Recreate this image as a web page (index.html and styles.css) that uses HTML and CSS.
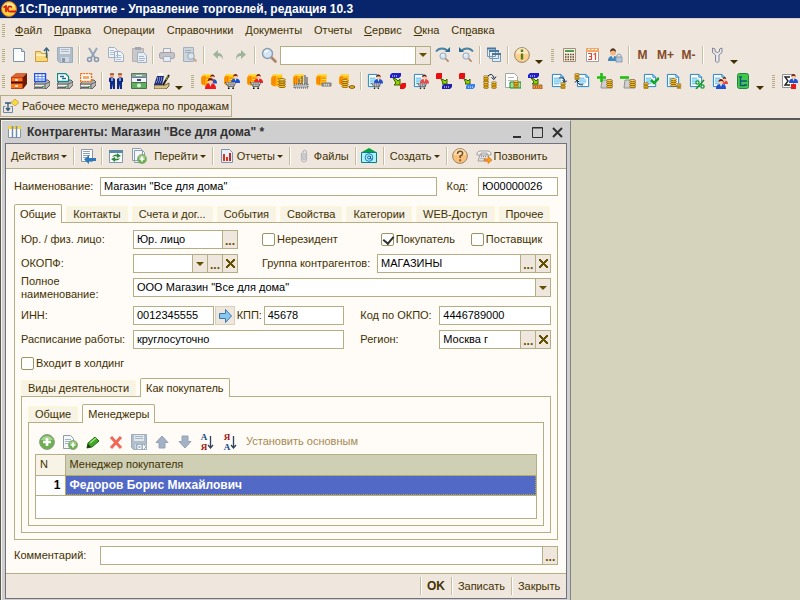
FILE: index.html
```
<!DOCTYPE html>
<html lang="ru">
  <head>
    <meta charset="utf-8">
    <title>1С:Предприятие - Управление торговлей, редакция 10.3</title>
    <link rel="stylesheet" href="styles.css">
  </head>
  <body>
    <svg class="sprite" aria-hidden="true">
      <!-- заготовки -->
      <symbol id="p-doc" viewBox="0 0 16 16">
        <path d="M1.500 1.500h9l3 3v10h-12z" fill="#fff" stroke="#1880c8"/>
        <path d="M10.500 1.500v3h3" fill="none" stroke="#1880c8"/>
        <path d="M3 5.500h6M3 7.500h8M3 9.500h8M3 11.500h6" stroke="#40b0e8"/>
      </symbol>
      <symbol id="p-sheet" viewBox="0 0 16 16">
        <path d="M2.500 1.500h8l3 3v10h-11z" fill="#fcfdff" stroke="#7b94ad"/>
        <path d="M10.500 1.500v3h3" fill="#d4e2ee" stroke="#7b94ad"/>
      </symbol>
      <symbol id="p-coins" viewBox="0 0 8 10">
        <g fill="#ffc71c" stroke="#7a4c00" stroke-width=".8">
          <ellipse cx="4" cy="8.400" rx="3.500" ry="1.200"/>
          <ellipse cx="4" cy="6.200" rx="3.500" ry="1.200"/>
          <ellipse cx="4" cy="4" rx="3.500" ry="1.200"/>
          <ellipse cx="4" cy="1.800" rx="3.500" ry="1.200" fill="#ffe46a"/>
        </g>
      </symbol>
      <symbol id="p-man" viewBox="0 0 10 10">
        <path d="M0 10c0-4 2-5 5-5s5 1 5 5z" fill="currentColor"/>
        <path d="M4 5l1 3 1-3z" fill="#fff"/>
        <circle cx="5" cy="3" r="2.400" fill="#ffc8a0"/>
        <path d="M2.500 3c0-4 5-4 5 0-1-1-3-1.500-5 0z" fill="#6a1c08"/>
      </symbol>
      <symbol id="p-goods" viewBox="0 0 16 16">
        <path d="M0 5l3-4h3v13H2l-2-2z" fill="#ff9c00"/>
        <path d="M6 1h6v9l-2 4H5z" fill="#ffc010"/>
        <path d="M3 1h9l-1 2H2z" fill="#ffde48"/>
        <path d="M2 5v7M4 4v9M6 6h5M6 9h5M6 12h4" stroke="#f07c00"/>
        <path d="M7 7.500h4M7 10.500h3" stroke="#ffe860"/>
      </symbol>
      <symbol id="p-cart" viewBox="0 0 12 8">
        <path d="M0 0h12l-2 5H3z" fill="#e8e8e8" stroke="#484848"/>
        <path d="M2 2.500h8M4 0v5M6.500 0v5M9 0v5" stroke="#585858" stroke-width=".7"/>
        <circle cx="4" cy="7" r="1"/><circle cx="9" cy="7" r="1"/>
      </symbol>
      <symbol id="p-printer" viewBox="0 0 16 16">
        <path d="M0 11l4-4h10l2 2v3l-4 4H1l-1-1z" fill="#b8b8b8" stroke="#404040" stroke-width=".8"/>
        <path d="M0 11h11l5-2M11 11v5" fill="none" stroke="#505050" stroke-width=".8"/>
        <path d="M1 12.500h9" stroke="#eee"/><path d="M1 14.500h8" stroke="#606060"/>
        <path d="M8 13.500h2" stroke="#30c030"/>
      </symbol>
      <symbol id="p-plus" viewBox="0 0 16 16">
        <circle cx="8" cy="8" r="7.400" fill="#6cb050" stroke="#8a9c84"/>
        <path d="M2 6a6.500 6.500 0 0 1 12 0z" fill="#a8d490"/>
        <path d="M8 4v8M4 8h8" stroke="#fff" stroke-width="2.600"/>
      </symbol>
      <symbol id="p-lens" viewBox="0 0 16 16">
        <path d="M10 10l4.500 4.500" stroke="#b08468" stroke-width="2.600" stroke-linecap="round"/>
        <circle cx="6.500" cy="6.500" r="5" fill="#d4e6f6" stroke="#8c9cb0" stroke-width="1.400"/>
        <path d="M4 6a3 3 0 0 1 3-2.500" stroke="#fff" stroke-width="1.500" fill="none"/>
      </symbol>

      <!-- стандартная панель -->
      <symbol id="i-new" viewBox="0 0 16 16"><use href="#p-sheet"/></symbol>
      <symbol id="i-open" viewBox="0 0 16 16">
        <path d="M1.500 14.500V4.500h5l1 2h6v8z" fill="#f8d878" stroke="#c89c40"/>
        <path d="M2 8h11" stroke="#fff0b8" stroke-width="2"/>
        <path d="M12.500 11V2M10 4l2.500-3L15 4" fill="none" stroke="#3c6478" stroke-width="1.400"/>
      </symbol>
      <symbol id="i-save" viewBox="0 0 16 16">
        <path d="M.500.500h15v15h-13l-2-2z" fill="#b0becc" stroke="#9cacbc"/>
        <path d="M3 1h10v6H3z" fill="#e0e8ee"/><path d="M4 2.500h8M4 4.500h8" stroke="#a8b8c8"/>
        <path d="M4 10h8v5H4z" fill="#d0d8e0"/><path d="M5 11h3v4H5z" fill="#8898ac"/>
      </symbol>
      <symbol id="i-cut" viewBox="0 0 16 16">
        <path d="M4 1l6 10M12 1L6 11" stroke="#94a4b8" stroke-width="2"/>
        <circle cx="4.500" cy="12.500" r="2" fill="none" stroke="#8496b0" stroke-width="1.500"/>
        <circle cx="11.500" cy="12.500" r="2" fill="none" stroke="#8496b0" stroke-width="1.500"/>
      </symbol>
      <symbol id="i-copy" viewBox="0 0 16 16">
        <path d="M.500.500h6l3 3v7h-9zM6.500 4.500h6l3 3v7h-9z" fill="#f0f4f8" stroke="#a0b0c4"/>
        <path d="M2 3.500h4M2 5.500h4M2 7.500h4M8 8.500h5M8 10.500h6M8 12.500h5" stroke="#b0c0d4"/>
      </symbol>
      <symbol id="i-paste" viewBox="0 0 16 16">
        <path d="M1.500 1.500h11v13h-11z" fill="#ccc8c8" stroke="#b4b0b4"/>
        <path d="M4 0h6v3H4z" fill="#a0a8b4"/>
        <path d="M6.500 5.500h6l3 3v7h-9z" fill="#e4ecf4" stroke="#a0b0c4"/>
        <path d="M8 9.500h5M8 11.500h6M8 13.500h5" stroke="#a8b8cc"/>
      </symbol>
      <symbol id="i-print" viewBox="0 0 16 16">
        <path d="M4.500 1.500h7v5h-7z" fill="#f0f0f4" stroke="#a8a8b8"/>
        <rect x=".5" y="5.500" width="15" height="6" rx="2" fill="#c4c4c8" stroke="#a0a0ac"/>
        <path d="M4.500 9.500h7v5h-7z" fill="#e4ecf8" stroke="#a8b0c0"/>
      </symbol>
      <symbol id="i-preview" viewBox="0 0 16 16">
        <path d="M1.500.500h10v14h-10z" fill="#ccd4dc" stroke="#a4b0bc"/>
        <path d="M3 3.500h6M3 5.500h5" stroke="#a4b0c0"/>
        <circle cx="9" cy="9" r="3.300" fill="#dce4ec" stroke="#98a4b4"/>
        <path d="M11.500 11.500l3 3" stroke="#c4a490" stroke-width="2"/>
      </symbol>
      <symbol id="i-undo" viewBox="0 0 16 16"><path d="M3 7.500l5-4.500v3c4 0 5 3 5 7-1-3-2-4-5-4v3z" fill="#a0b49c"/></symbol>
      <symbol id="i-redo" viewBox="0 0 16 16"><path d="M13 7.500L8 3v3c-4 0-5 3-5 7 1-3 2-4 5-4v3z" fill="#a0b49c"/></symbol>
      <symbol id="i-find" viewBox="0 0 16 16"><use href="#p-lens"/></symbol>
      <symbol id="i-find-next" viewBox="0 0 16 16">
        <path d="M1 4.500c3-4 9-4 12 0" fill="none" stroke="#4c84a4" stroke-width="2"/><path d="M10 5h5V0z" fill="#2c6c90"/>
        <use href="#p-lens" x="4" y="5" width="10" height="10"/>
      </symbol>
      <symbol id="i-find-prev" viewBox="0 0 16 16">
        <path d="M15 4.500c-3-4-9-4-12 0" fill="none" stroke="#4c84a4" stroke-width="2"/><path d="M6 5H1V0z" fill="#2c6c90"/>
        <use href="#p-lens" x="4" y="5" width="10" height="10"/>
      </symbol>
      <symbol id="i-windows" viewBox="0 0 16 16">
        <g fill="#e4eef6" stroke="#7898b0"><path d="M1.500 1.500h8v8h-8zM3.500 3.500h9v8h-9zM6.500 6.500h8v8h-8z"/></g>
        <path d="M1 1.500h9M3 4h10M6 7h9" stroke="#48789c" stroke-width="2"/>
      </symbol>
      <symbol id="i-info" viewBox="0 0 16 16">
        <circle cx="8" cy="8" r="7.400" fill="#fcd08c" stroke="#988870"/>
        <path d="M2 7a6 6 0 0 1 12 0z" fill="#ffe8c0"/>
        <path d="M8 2.500v2.500M8 6.500v6" stroke="#508020" stroke-width="2.400"/>
      </symbol>
      <symbol id="i-calc" viewBox="0 0 16 16">
        <path d="M2.500 1.500h12v13h-12z" fill="#f8f0dc" stroke="#a09078"/>
        <path d="M4 3h9v2H4z" fill="#4c9c58"/>
        <path d="M4 7.500h9M4 10h9M4 12.500h9" stroke="#604030" stroke-width="1.400" stroke-dasharray="1.500 1"/>
      </symbol>
      <symbol id="i-calendar" viewBox="0 0 16 16">
        <path d="M2.500 1.500h12v13h-12z" fill="#fff" stroke="#a8a098"/><path d="M2 1h13v4H2z" fill="#f0a868"/>
        <path d="M4 2.500h9" stroke="#fff" stroke-dasharray="2 1.500"/>
        <path d="M4 6.500h3.500v6H4M5 9.500h2.500M9.500 7.500l2-1v6.500" fill="none" stroke="#e04838" stroke-width="1.200"/>
      </symbol>
      <symbol id="i-user-lock" viewBox="0 0 16 16">
        <path d="M1 14c0-4 2-5 5-5s5 1 5 5z" fill="#4088b8"/><path d="M5 9l1 3 1-3z" fill="#fff"/>
        <circle cx="6" cy="5.500" r="3" fill="#f4b880"/><path d="M3 5c0-5 6-5 6 0-2-2-4-2-6 0z" fill="#503828"/>
        <path d="M10 10V8q2-2 4 0v2" fill="none" stroke="#90a0b0"/><path d="M9 10h6v5H9z" fill="#b4c8dc" stroke="#7890a8" stroke-width=".8"/>
      </symbol>
      <symbol id="i-wrench" viewBox="0 0 16 16">
        <path d="M3.500 1v4.500l3 2.500v6.500q2 2 3.500 0V8l3-2.500V1l-2.500 1v2.500l-2.200 1-2.300-1V2z" fill="#e8e8ec" stroke="#848894"/>
      </symbol>

      <!-- панель конфигурации -->
      <symbol id="i-cabinet" viewBox="0 0 16 16">
        <path d="M0 4l5-4h11l-4 4z" fill="#d86838"/><path d="M0 4h12v12H0z" fill="#c83c10"/><path d="M12 4l4-4v11l-4 5z" fill="#6c1c08"/>
        <path d="M0 9.500h12" stroke="#501000" stroke-width="1.500"/><path d="M1 5h10v3H1zM0 11h11v4H0z" fill="#f87820"/><path d="M4 7h3M4 13h3" stroke="#fff" stroke-width="1.500"/>
      </symbol>
      <symbol id="i-print-table" viewBox="0 0 16 16"><use href="#p-printer"/>
        <path d="M.500.500h11v8H.500z" fill="#fff" stroke="#2050e8" stroke-width="1.500"/><path d="M4 1v7M8 1v7M1 3.500h10M1 6h10" stroke="#6088f0"/>
      </symbol>
      <symbol id="i-print-doc" viewBox="0 0 16 16"><use href="#p-printer"/>
        <path d="M.500.500h8l3 3v5H.500z" fill="#fff" stroke="#108888" stroke-width="1.300"/><path d="M3 3.500h4M5 5.500h4" stroke="#2070a0" stroke-width="1.500"/>
      </symbol>
      <symbol id="i-print-label" viewBox="0 0 16 16"><use href="#p-printer"/>
        <path d="M.500.500h11v8H.500z" fill="#fff" stroke="#f07010" stroke-width="1.500" stroke-dasharray="2 .7"/><path d="M3 3h6v3H3z" fill="#f8a868"/>
      </symbol>
      <symbol id="i-partners" viewBox="0 0 16 16">
        <path d="M1 5l3-1 3 2v10H5v-5l-1 5H2V9L1 9zM15 5l-3-1-3 2v10h2v-5l1 5h2V9h1z" fill="#0c2c88"/><path d="M4 5v3M12 5v3" stroke="#fff"/>
        <circle cx="4" cy="2.500" r="2" fill="#f8a070"/><circle cx="12" cy="2.500" r="2" fill="#f8a070"/><path d="M2 1h4M10 1h4" stroke="#501808"/>
      </symbol>
      <symbol id="i-money" viewBox="0 0 16 16">
        <path d="M.500.500h15v4H.500z" fill="#84a890" stroke="#587868"/><path d="M.500 4.500h15v5H.500z" fill="#f4f4f8" stroke="#7078a0"/><path d="M.500 9.500h15v6H.500z" fill="#60b060" stroke="#487048"/>
        <circle cx="8" cy="12.500" r="2" fill="#dcf0dc"/><path d="M5 2.500h6" stroke="#e8f8e8"/><path d="M6 7h4" stroke="#3c4880" stroke-width="2"/>
      </symbol>
      <symbol id="i-register" viewBox="0 0 16 16">
        <path d="M0 12h11l4-2v3l-3 3H0z" fill="#d8c080" stroke="#504020" stroke-width=".8"/><path d="M3 3h7l-2 9H0z" fill="#203080"/>
        <path d="M2 9h6M3 7h6M3 5h6" stroke="#c8d4f4" stroke-dasharray="1 1"/><path d="M4 1h5" stroke="#fff" stroke-width="2"/><path d="M15 2L9 12" stroke="#202010" stroke-width="2"/><path d="M14 3l-2 4" stroke="#88b040"/>
      </symbol>
      <symbol id="i-goods-people" viewBox="0 0 16 16"><use href="#p-goods" width="14" height="14"/><use href="#p-man" x="7" y="1" width="9" height="10" color="#2050b8"/><use href="#p-man" x="4" y="5" width="11" height="11" color="#f01818"/></symbol>
      <symbol id="i-cart-blue" viewBox="0 0 16 16"><use href="#p-goods" width="14" height="14"/><use href="#p-man" x="7" y="1" width="9" height="9" color="#1850d8"/><use href="#p-cart" x="0" y="9" width="13" height="7"/></symbol>
      <symbol id="i-cart-red" viewBox="0 0 16 16"><use href="#p-goods" width="14" height="14"/><use href="#p-man" x="7" y="1" width="9" height="9" color="#f02020"/><use href="#p-cart" x="2" y="9" width="13" height="7"/></symbol>
      <symbol id="i-goods-coins" viewBox="0 0 16 16"><use href="#p-goods" x="1" width="15" height="15"/><use href="#p-coins" x="8" y="5" width="8" height="10"/></symbol>
      <symbol id="i-goods-basket" viewBox="0 0 16 16"><use href="#p-goods" width="14" height="14"/><path d="M9 3v8M12 2v9M14 4v7M6 6v5" stroke="#707070" stroke-width="1.400"/><path d="M1 11h14v4H1z" fill="#b8b8b8" stroke="#505050" stroke-dasharray="1 1"/></symbol>
      <symbol id="i-goods-box" viewBox="0 0 16 16"><use href="#p-goods" width="14" height="14"/><path d="M6 10h9v3H6z" fill="#a8a8a8" stroke="#606060" stroke-width=".8"/><path d="M8 12h6" stroke="#fff" stroke-dasharray="1 1"/></symbol>
      <symbol id="i-goods-pay" viewBox="0 0 16 16"><use href="#p-goods" width="13" height="14"/><use href="#p-coins" x="2" y="6" width="8" height="9"/><ellipse cx="13" cy="14" rx="3" ry="1.300" fill="#ffc71c" stroke="#7a4c00"/></symbol>
      <symbol id="i-order-blue" viewBox="0 0 16 16"><use href="#p-doc" width="15" height="15"/><use href="#p-man" x="7" y="1" width="9" height="10" color="#2050d0"/><use href="#p-cart" x="3" y="10" width="12" height="6"/></symbol>
      <symbol id="i-order-red" viewBox="0 0 16 16"><use href="#p-doc" width="15" height="15"/><use href="#p-man" x="7" y="1" width="9" height="10" color="#f04848"/><use href="#p-cart" x="3" y="10" width="12" height="6"/></symbol>
      <symbol id="i-sale" viewBox="0 0 16 16">
        <path d="M0 2l2-2h9v3L9 5H0z" fill="#2020c8"/><path d="M2 3h6" stroke="#fff" stroke-dasharray="1 1"/><path d="M3 5l3 1 2 2 2-2v6H4l2-2z" fill="#90d800" stroke="#386000"/><path d="M10 12l2-2h4v4l-2 2h-4z" fill="#e81010"/>
      </symbol>
      <symbol id="i-purchase" viewBox="0 0 16 16">
        <path d="M0 1l1-1h5v5L5 6H0z" fill="#e81010"/><path d="M5 6l3 1 1 1 2-2v5H6l1-1z" fill="#90d800" stroke="#386000"/><path d="M6 13l2-2h8v3l-2 2H6z" fill="#2020a8"/><path d="M8 14h5" stroke="#fff" stroke-dasharray="1 1"/>
      </symbol>
      <symbol id="i-return" viewBox="0 0 16 16">
        <path d="M0 1l1-1h5v5L5 6H0z" fill="#e81010"/><path d="M5 6l3 1 1 1 2-2v5H6l1-1z" fill="#90d800" stroke="#386000"/><path d="M7 13l2-2h7v3l-2 2H7z" fill="#3880f0"/><path d="M9 14h5" stroke="#fff" stroke-dasharray="1 1"/>
      </symbol>
      <symbol id="i-transfer" viewBox="0 0 16 16"><use href="#p-coins" x="1" y="2" width="6" height="8"/><use href="#p-coins" x="1" y="8" width="6" height="8"/><use href="#p-coins" x="9" y="8" width="6" height="8"/><path d="M6 3q4-4 6 2M9.500 4.500l2.500 2 2-3" fill="none" stroke="#102848"/></symbol>
      <symbol id="i-doc-cash" viewBox="0 0 16 16"><path d="M.500.500h9l3 3v11H.500z" fill="#fff" stroke="#a0a8a8"/><path d="M3 4.500h6M3 7.500h6" stroke="#b0b8b8"/><path d="M5 9h11v6H5z" fill="#a0e098" stroke="#188820"/><use href="#p-coins" x="8" y="7" width="6" height="8"/></symbol>
      <symbol id="i-sale-box" viewBox="0 0 16 16"><path d="M0 2l2-2h9v3L9 5H0z" fill="#2020c8"/><path d="M2 3h6" stroke="#fff" stroke-dasharray="1 1"/><path d="M3 5l3 1 2 2 2-2v5H4l2-2z" fill="#90d800" stroke="#386000"/><path d="M5 12h9v4H5z" fill="#f89838" stroke="#704010" stroke-width=".7"/><path d="M7 14h6" stroke="#703000" stroke-dasharray="1 1"/></symbol>
      <symbol id="i-doc-out" viewBox="0 0 16 16"><use href="#p-doc" width="15" height="15"/><path d="M8 5q6-1 6 4M11.500 7.500l2.500 2 2-2" fill="none" stroke="#102848"/><use href="#p-coins" x="9" y="9" width="6" height="7"/></symbol>
      <symbol id="i-doc-in" viewBox="0 0 16 16"><use href="#p-doc" x="2" width="15" height="15"/><use href="#p-coins" x="0" y="0" width="6" height="7"/><path d="M3 7q0 5 6 5M1 9.500l2-2.500 2 2" fill="none" stroke="#102848"/></symbol>
      <symbol id="i-coins-plus" viewBox="0 0 16 16"><path d="M5 7h10v8H4z" fill="#d0d0d0" stroke="#909090"/><use href="#p-coins" x="9" y="6" width="7" height="9"/><path d="M4.500 0v9M0 4.500h9" stroke="#20c010" stroke-width="2.600"/></symbol>
      <symbol id="i-coins-minus" viewBox="0 0 16 16"><path d="M5 7h10v8H4z" fill="#d0d0d0" stroke="#909090"/><use href="#p-coins" x="9" y="6" width="7" height="9"/><path d="M0 4.500h9" stroke="#20c010" stroke-width="2.600"/></symbol>
      <symbol id="i-doc-check" viewBox="0 0 16 16"><use href="#p-doc" width="15" height="15"/><use href="#p-coins" x="0" y="9" width="6" height="7"/><path d="M8 7l3 3 5-5" fill="none" stroke="#10a828" stroke-width="2.500"/></symbol>
      <symbol id="i-doc-coins" viewBox="0 0 16 16"><use href="#p-doc" width="15" height="15"/><use href="#p-coins" x="4" y="4" width="7" height="11"/><use href="#p-coins" x="10" y="10" width="6" height="6"/></symbol>
      <symbol id="i-doc-percent" viewBox="0 0 16 16"><use href="#p-doc" width="15" height="15"/><path d="M15 7l-8 9" stroke="#109828" stroke-width="1.600"/><circle cx="8.500" cy="9.500" r="1.600" fill="#fff" stroke="#109828" stroke-width="1.300"/><circle cx="13.500" cy="13.500" r="1.600" fill="#fff" stroke="#109828" stroke-width="1.300"/></symbol>
      <symbol id="i-doc-people" viewBox="0 0 16 16"><use href="#p-doc" width="15" height="15"/><use href="#p-man" x="9" y="3" width="7" height="9" color="#f04040"/><use href="#p-man" x="4" y="6" width="10" height="10" color="#2050d0"/></symbol>
      <symbol id="i-tree" viewBox="0 0 16 16"><rect x="2.500" y=".5" width="11" height="15" rx="2" fill="#40c84c" stroke="#208838"/><path d="M5.500 4v8.500H10M5.500 8H10M4 4h3M9 8h3M9 12h3" fill="none" stroke="#105878" stroke-width="1.400"/></symbol>
      <symbol id="i-sum" viewBox="0 0 16 16"><path d="M.500 1.500h11v13H.500z" fill="#fff" stroke="#909090"/><path d="M8 4H3l3 4-3 4h5" fill="none" stroke="#202020" stroke-width="1.400"/><use href="#p-man" x="7" y="0" width="9" height="11" color="#2050d0"/><path d="M9 11h5v5H9z" fill="#e81818"/></symbol>

      <!-- окно -->
      <symbol id="i-logo" viewBox="0 0 16 16">
        <circle cx="8" cy="8" r="7.500" fill="#ffd040" stroke="#d87010"/><path d="M2 6a6.500 6.500 0 0 1 12 0z" fill="#fff0a0"/>
        <path d="M2.500 6.500L5 5v6M11 6q-4-2-4.200 2 .2 3 3.200 2.500h5" fill="none" stroke="#d81818" stroke-width="1.800"/>
      </symbol>
      <symbol id="i-desk" viewBox="0 0 16 16">
        <path d="M12 1l4 3.500L12 8 8 4.500z" fill="#fcd840" stroke="#b8942c" stroke-width=".7"/><path d="M2 5h6M5 5v7M3 10l2 2.500L7 10" fill="none" stroke="#305880" stroke-width="1.300"/>
        <path d="M.500 8.500h2M7.500 8.500h2v6h-9v-6" fill="none" stroke="#6888a8"/>
      </symbol>
      <symbol id="i-table" viewBox="0 0 16 16"><path d="M1.500 2.500h12v11h-12z" fill="#fff" stroke="#8494a4"/><path d="M1 2h13v3H1z" fill="#f8d040"/><path d="M5.500 2v12M9.500 2v12" stroke="#6c8cb0" stroke-width="1.500"/></symbol>
      <symbol id="i-list-back" viewBox="0 0 16 16"><path d="M1.500 1.500h11v12h-11z" fill="#fff" stroke="#8898a8"/><path d="M3 3.500h7M3 5.500h7M3 7.500h7M3 9.500h3" stroke="#90a4b8"/><path d="M4 11.500L9 7v3h7v3H9v3z" fill="#2c78b8"/></symbol>
      <symbol id="i-refresh" viewBox="0 0 16 16"><path d="M1.500 2.500h13v12h-13z" fill="#fff" stroke="#7c98ac"/><path d="M1 3.500h14" stroke="#5c88a8" stroke-width="3"/><path d="M4 9q1-3 5-2.500L9 5l4 3-4 2V8.500Q6 8 4 9zM12 10q-1 3-5 2.500V14l-4-3 4-2v1.500q3 .5 5-.5z" fill="#30883c"/></symbol>
      <symbol id="i-add-copy" viewBox="0 0 16 16"><path d="M1.500.500h8l2 2v10h-10zM3.500 2.500h8l2 2v10h-10z" fill="#f4f8fc" stroke="#8c9cac"/><use href="#p-plus" x="6" y="6" width="10" height="10"/></symbol>
      <symbol id="i-chart" viewBox="0 0 16 16"><path d="M2.500 1.500h8l3 3v10h-11z" fill="#e8f0f8" stroke="#7b94ad"/><path d="M5 6v7" stroke="#e03020" stroke-width="2"/><path d="M8 9v4" stroke="#e03020" stroke-width="2"/><path d="M11 5v8" stroke="#c02828" stroke-width="2"/></symbol>
      <symbol id="i-clip" viewBox="0 0 16 16"><path d="M5.500 5v7q2.500 4 5 0V4q-2-4-3.500 0v7q1 1.500 2 0V5" fill="none" stroke="#b4b8c0" stroke-width="1.200"/></symbol>
      <symbol id="i-mail" viewBox="0 0 16 16"><path d="M0 4.500L8 0l8 4.500z" fill="#08a040"/><path d="M.500 4.500h15v10H.500z" fill="#b0f0f8" stroke="#088088"/><circle cx="8" cy="9.500" r="3.800" fill="none" stroke="#1080c0"/><circle cx="8" cy="9.500" r="1.500" fill="none" stroke="#1060b0"/><path d="M9.500 8v3h2" fill="none" stroke="#1060b0"/></symbol>
      <symbol id="i-help" viewBox="0 0 16 16"><circle cx="8" cy="8" r="7.400" fill="#fcc078" stroke="#988870"/><path d="M2 7a6 6 0 0 1 12 0z" fill="#ffdcac"/><path d="M5.500 6q0-3 3-2.800 2.500.3 2 2.800-.5 1.500-2.300 2v2M8.200 11.200v2" fill="none" stroke="#705030" stroke-width="1.600"/></symbol>
      <symbol id="i-phone" viewBox="0 0 16 16"><path d="M1 7V5q1-2 3-2h8q2 0 3 2v2h-4V5H5v2z" fill="#f0f0f0" stroke="#909090" stroke-width=".8"/><path d="M4 7h8l2 6H2z" fill="#e4e4e8" stroke="#909090" stroke-width=".8"/><path d="M5 8.500h5M4.500 10.500h5" stroke="#808890" stroke-dasharray="1 1"/><path d="M8 11h4V8.500l4 3.500-4 3.500V13H8z" fill="#f8a010" stroke="#e06010" stroke-width=".6"/></symbol>
      <symbol id="i-arrow" viewBox="0 0 16 16"><path d="M2.500 5.500h6v-4l6 6.500-6 6.500v-4h-6z" fill="#88c8f0" stroke="#3c78a8"/></symbol>
      <symbol id="i-add" viewBox="0 0 16 16"><use href="#p-plus"/></symbol>
      <symbol id="i-add-doc" viewBox="0 0 16 16"><path d="M1.500 1.500h7l3 3v10h-10z" fill="#f4f8fc" stroke="#8c9cac"/><path d="M3 5.500h6M3 7.500h6M3 9.500h4" stroke="#a0b4c8"/><use href="#p-plus" x="6" y="6" width="10" height="10"/></symbol>
      <symbol id="i-edit" viewBox="0 0 16 16"><path d="M2 14l1-5 7-6 4 4-7 6z" fill="#40a828" stroke="#187010"/><path d="M5 9l6-5" stroke="#a0e080" stroke-width="1.500"/><path d="M2 14l1-4 3 3z" fill="#302810"/></symbol>
      <symbol id="i-delete" viewBox="0 0 16 16"><path d="M3 3l10 11M13 3L3 14" stroke="#f06858" stroke-width="3"/></symbol>
      <symbol id="i-save-ok" viewBox="0 0 16 16"><use href="#i-save"/><path d="M5 10h11v6H5z" fill="#a0b0c4"/><path d="M7 11.500h3v3H7zM12.500 11v4M15 11l-2 2 2 2" fill="none" stroke="#fff"/></symbol>
      <symbol id="i-up" viewBox="0 0 16 16"><path d="M8 2l6 6.500h-3V14H5V8.500H2z" fill="#a4b0c4" stroke="#94a4b8"/></symbol>
      <symbol id="i-down" viewBox="0 0 16 16"><path d="M8 14L2 7.500h3V2h6v5.500h3z" fill="#a4b0c4" stroke="#94a4b8"/></symbol>
      <symbol id="i-sort" viewBox="0 0 7 16"><path d="M3.500 2v12M1 11l2.500 3L6 11" fill="none" stroke="#304458" stroke-width="1.300"/></symbol>
    </svg>

    <header class="titlebar">
      <svg class="icon"><use href="#i-logo"/></svg>
      <h1>1С:Предприятие - Управление торговлей, редакция 10.3</h1>
    </header>

    <nav class="menubar">
      <span class="grip"></span>
      <button><u>Ф</u>айл</button>
      <button><u>П</u>равка</button>
      <button>Операции</button>
      <button>Справочники</button>
      <button>Документы</button>
      <button>Отчеты</button>
      <button><u>С</u>ервис</button>
      <button><u>О</u>кна</button>
      <button>Сп<u>р</u>авка</button>
    </nav>

    <div class="toolbar">
      <span class="grip"></span>
      <button class="tool" aria-label="Новый"><svg class="icon"><use href="#i-new"/></svg></button>
      <button class="tool" aria-label="Открыть"><svg class="icon"><use href="#i-open"/></svg></button>
      <button class="tool" aria-label="Сохранить"><svg class="icon"><use href="#i-save"/></svg></button>
      <span class="sep"></span>
      <button class="tool" aria-label="Вырезать"><svg class="icon"><use href="#i-cut"/></svg></button>
      <button class="tool" aria-label="Копировать"><svg class="icon"><use href="#i-copy"/></svg></button>
      <button class="tool" aria-label="Вставить"><svg class="icon"><use href="#i-paste"/></svg></button>
      <span class="sep"></span>
      <button class="tool" aria-label="Печать"><svg class="icon"><use href="#i-print"/></svg></button>
      <button class="tool" aria-label="Просмотр"><svg class="icon"><use href="#i-preview"/></svg></button>
      <span class="sep"></span>
      <button class="tool" aria-label="Отменить"><svg class="icon"><use href="#i-undo"/></svg></button>
      <button class="tool" aria-label="Вернуть"><svg class="icon"><use href="#i-redo"/></svg></button>
      <span class="sep"></span>
      <button class="tool" aria-label="Найти"><svg class="icon"><use href="#i-find"/></svg></button>
      <span class="field search"><input type="text" aria-label="Поиск"><button aria-label="Список"><i class="down"></i></button></span>
      <button class="tool" aria-label="Найти далее"><svg class="icon"><use href="#i-find-next"/></svg></button>
      <button class="tool" aria-label="Найти ранее"><svg class="icon"><use href="#i-find-prev"/></svg></button>
      <span class="sep"></span>
      <button class="tool" aria-label="Окна"><svg class="icon"><use href="#i-windows"/></svg></button>
      <span class="sep"></span>
      <button class="tool" aria-label="Справка"><svg class="icon"><use href="#i-info"/></svg></button>
      <button class="more" aria-label="Еще"><i class="down"></i></button>
      <span class="grip inner"></span>
      <button class="tool" aria-label="Калькулятор"><svg class="icon"><use href="#i-calc"/></svg></button>
      <button class="tool" aria-label="Календарь"><svg class="icon"><use href="#i-calendar"/></svg></button>
      <button class="tool" aria-label="Пользователи"><svg class="icon"><use href="#i-user-lock"/></svg></button>
      <span class="sep"></span>
      <button class="tool memory">M</button>
      <button class="tool memory">M+</button>
      <button class="tool memory">M-</button>
      <span class="sep"></span>
      <button class="tool" aria-label="Настройка"><svg class="icon"><use href="#i-wrench"/></svg></button>
      <button class="more" aria-label="Еще"><i class="down"></i></button>
    </div>

    <div class="toolbar">
      <span class="grip"></span>
      <button class="tool" aria-label="Номенклатура"><svg class="icon"><use href="#i-cabinet"/></svg></button>
      <button class="tool" aria-label="Печать таблицы"><svg class="icon"><use href="#i-print-table"/></svg></button>
      <button class="tool" aria-label="Печать документа"><svg class="icon"><use href="#i-print-doc"/></svg></button>
      <button class="tool" aria-label="Печать этикеток"><svg class="icon"><use href="#i-print-label"/></svg></button>
      <span class="sep"></span>
      <button class="tool" aria-label="Контрагенты"><svg class="icon"><use href="#i-partners"/></svg></button>
      <button class="tool" aria-label="Валюты"><svg class="icon"><use href="#i-money"/></svg></button>
      <button class="tool" aria-label="Касса"><svg class="icon"><use href="#i-register"/></svg></button>
      <button class="more" aria-label="Еще"><i class="down"></i></button>
      <span class="grip inner"></span>
      <button class="tool" aria-label="Продажи"><svg class="icon"><use href="#i-goods-people"/></svg></button>
      <button class="tool" aria-label="Заказы покупателей"><svg class="icon"><use href="#i-cart-blue"/></svg></button>
      <button class="tool" aria-label="Заказы поставщикам"><svg class="icon"><use href="#i-cart-red"/></svg></button>
      <button class="tool" aria-label="Цены"><svg class="icon"><use href="#i-goods-coins"/></svg></button>
      <button class="tool" aria-label="Корзина"><svg class="icon"><use href="#i-goods-basket"/></svg></button>
      <button class="tool" aria-label="Склад"><svg class="icon"><use href="#i-goods-box"/></svg></button>
      <button class="tool" aria-label="Оплата товаров"><svg class="icon"><use href="#i-goods-pay"/></svg></button>
      <span class="sep"></span>
      <button class="tool" aria-label="Заказ покупателя"><svg class="icon"><use href="#i-order-blue"/></svg></button>
      <button class="tool" aria-label="Реализация"><svg class="icon"><use href="#i-sale"/></svg></button>
      <button class="tool" aria-label="Заказ поставщику"><svg class="icon"><use href="#i-order-red"/></svg></button>
      <button class="tool" aria-label="Поступление"><svg class="icon"><use href="#i-purchase"/></svg></button>
      <button class="tool" aria-label="Возврат"><svg class="icon"><use href="#i-return"/></svg></button>
      <button class="tool" aria-label="Перемещение денег"><svg class="icon"><use href="#i-transfer"/></svg></button>
      <button class="tool" aria-label="Кассовый документ"><svg class="icon"><use href="#i-doc-cash"/></svg></button>
      <button class="tool" aria-label="Перемещение товаров"><svg class="icon"><use href="#i-sale-box"/></svg></button>
      <button class="tool" aria-label="Платеж исходящий"><svg class="icon"><use href="#i-doc-out"/></svg></button>
      <button class="tool" aria-label="Платеж входящий"><svg class="icon"><use href="#i-doc-in"/></svg></button>
      <button class="tool" aria-label="Приход"><svg class="icon"><use href="#i-coins-plus"/></svg></button>
      <button class="tool" aria-label="Расход"><svg class="icon"><use href="#i-coins-minus"/></svg></button>
      <button class="tool" aria-label="Проведение"><svg class="icon"><use href="#i-doc-check"/></svg></button>
      <button class="tool" aria-label="Установка цен"><svg class="icon"><use href="#i-doc-coins"/></svg></button>
      <button class="tool" aria-label="Скидки"><svg class="icon"><use href="#i-doc-percent"/></svg></button>
      <button class="tool" aria-label="Взаиморасчеты"><svg class="icon"><use href="#i-doc-people"/></svg></button>
      <button class="tool" aria-label="Структура"><svg class="icon"><use href="#i-tree"/></svg></button>
      <button class="more" aria-label="Еще"><i class="down"></i></button>
      <span class="grip inner"></span>
      <button class="tool" aria-label="Отчет"><svg class="icon"><use href="#i-sum"/></svg></button>
    </div>

    <div class="taskbar">
      <button><svg class="icon"><use href="#i-desk"/></svg>Рабочее место менеджера по продажам</button>
    </div>

    <main class="workspace">
      <section class="window">
        <header class="window-title">
          <svg class="icon"><use href="#i-table"/></svg>
          <h2>Контрагенты: Магазин "Все для дома" *</h2>
          <button aria-label="Свернуть"><svg class="icon" viewBox="0 0 16 16"><path d="M4 13h8" stroke="#303030" stroke-width="2"/></svg></button>
          <button aria-label="Развернуть"><svg class="icon" viewBox="0 0 16 16"><path d="M3.500 3.500h10v10h-10zM3 4h11" fill="none" stroke="#303030"/></svg></button>
          <button aria-label="Закрыть окно"><svg class="icon" viewBox="0 0 16 16"><path d="M4 4l9 9M13 4l-9 9" stroke="#303030" stroke-width="2"/></svg></button>
        </header>

        <div class="frame">
          <div class="window-tools">
            <button class="text">Действия<i class="down"></i></button>
            <span class="sep"></span>
            <button class="tool" aria-label="Найти в списке"><svg class="icon"><use href="#i-list-back"/></svg></button>
            <span class="sep"></span>
            <button class="tool" aria-label="Обновить"><svg class="icon"><use href="#i-refresh"/></svg></button>
            <button class="tool" aria-label="Скопировать"><svg class="icon"><use href="#i-add-copy"/></svg></button>
            <button class="text">Перейти<i class="down"></i></button>
            <span class="sep"></span>
            <button class="text"><svg class="icon"><use href="#i-chart"/></svg>Отчеты<i class="down"></i></button>
            <span class="sep"></span>
            <button class="text"><svg class="icon"><use href="#i-clip"/></svg>Файлы</button>
            <span class="sep"></span>
            <button class="tool" aria-label="Почта"><svg class="icon"><use href="#i-mail"/></svg></button>
            <span class="sep"></span>
            <button class="text">Создать<i class="down"></i></button>
            <span class="sep"></span>
            <button class="tool" aria-label="Помощь"><svg class="icon"><use href="#i-help"/></svg></button>
            <button class="text"><svg class="icon"><use href="#i-phone"/></svg>Позвонить</button>
          </div>

          <form class="content" onsubmit="return false">
            <div class="row head">
              <label for="name">Наименование:</label>
              <span class="field grow"><input id="name" type="text" value='Магазин "Все для дома"'></span>
              <label class="code-label" for="code">Код:</label>
              <span class="field code"><input id="code" type="text" value="Ю00000026"></span>
            </div>

            <div class="tabs">
              <button class="tab active">Общие</button>
              <button class="tab">Контакты</button>
              <button class="tab">Счета и дог...</button>
              <button class="tab">События</button>
              <button class="tab">Свойства</button>
              <button class="tab">Категории</button>
              <button class="tab">WEB-Доступ</button>
              <button class="tab">Прочее</button>
            </div>
            <div class="panel">
              <div class="row">
                <label class="label" for="kind">Юр. / физ. лицо:</label>
                <span class="field short"><input id="kind" type="text" value="Юр. лицо"><button class="dots">...</button></span>
                <span class="checks">
                  <label><input type="checkbox">Нерезидент</label>
                  <label><input type="checkbox" checked>Покупатель</label>
                  <label><input type="checkbox">Поставщик</label>
                </span>
              </div>
              <div class="row">
                <label class="label" for="okopf">ОКОПФ:</label>
                <span class="field short"><input id="okopf" type="text"><button aria-label="Список"><i class="down"></i></button><button class="dots">...</button><button aria-label="Очистить"><i class="cross"></i></button></span>
                <label class="group-label" for="group">Группа контрагентов:</label>
                <span class="field grow"><input id="group" type="text" value="МАГАЗИНЫ"><button class="dots">...</button><button aria-label="Очистить"><i class="cross"></i></button></span>
              </div>
              <div class="row">
                <label class="label two-lines" for="full">Полное наименование:</label>
                <span class="field grow"><input id="full" type="text" value='ООО Магазин "Все для дома"'><button aria-label="Список"><i class="down"></i></button></span>
              </div>
              <div class="row inn-row">
                <label class="label" for="inn">ИНН:</label>
                <span class="left">
                  <span class="field grow"><input id="inn" type="text" value="0012345555"></span>
                  <button class="go" aria-label="Проверить"><svg class="icon"><use href="#i-arrow"/></svg></button>
                  <label class="kpp-label" for="kpp">КПП:</label>
                  <span class="field grow"><input id="kpp" type="text" value="45678"></span>
                </span>
                <label class="side-label" for="okpo">Код по ОКПО:</label>
                <span class="field side"><input id="okpo" type="text" value="4446789000"></span>
              </div>
              <div class="row">
                <label class="label" for="hours">Расписание работы:</label>
                <span class="left"><span class="field grow"><input id="hours" type="text" value="круглосуточно"></span></span>
                <label class="side-label" for="region">Регион:</label>
                <span class="field side"><input id="region" type="text" value="Москва г"><button class="dots">...</button><button aria-label="Очистить"><i class="cross"></i></button></span>
              </div>
              <div class="row">
                <label><input type="checkbox">Входит в холдинг</label>
              </div>

              <div class="tabs">
                <button class="tab">Виды деятельности</button>
                <button class="tab active">Как покупатель</button>
              </div>
              <div class="panel">
                <div class="tabs">
                  <button class="tab">Общие</button>
                  <button class="tab active">Менеджеры</button>
                </div>
                <div class="panel">
                  <div class="list-tools">
                    <button class="tool" aria-label="Добавить"><svg class="icon"><use href="#i-add"/></svg></button>
                    <button class="tool" aria-label="Скопировать строку"><svg class="icon"><use href="#i-add-doc"/></svg></button>
                    <button class="tool" aria-label="Изменить"><svg class="icon"><use href="#i-edit"/></svg></button>
                    <button class="tool" aria-label="Удалить"><svg class="icon"><use href="#i-delete"/></svg></button>
                    <button class="tool" aria-label="Закончить"><svg class="icon"><use href="#i-save-ok"/></svg></button>
                    <button class="tool" aria-label="Вверх"><svg class="icon"><use href="#i-up"/></svg></button>
                    <button class="tool" aria-label="Вниз"><svg class="icon"><use href="#i-down"/></svg></button>
                    <button class="tool sort"><span><b class="blue">А</b><b class="red">Я</b></span><svg class="sort-arrow"><use href="#i-sort"/></svg></button>
                    <button class="tool sort"><span><b class="red">Я</b><b class="blue">А</b></span><svg class="sort-arrow"><use href="#i-sort"/></svg></button>
                    <button class="text muted">Установить основным</button>
                  </div>
                  <div class="list">
                    <table>
                      <thead>
                        <tr><th class="num">N</th><th>Менеджер покупателя</th></tr>
                      </thead>
                      <tbody>
                        <tr><td class="num">1</td><td class="selected">Федоров Борис Михайлович</td></tr>
                      </tbody>
                    </table>
                  </div>
                </div>
              </div>
            </div>

            <div class="row comment">
              <label for="comment">Комментарий:</label>
              <span class="field grow"><input id="comment" type="text"><button class="dots">...</button></span>
            </div>
          </form>

          <footer class="window-footer">
            <span class="sep"></span>
            <button class="text"><b>OK</b></button>
            <span class="sep"></span>
            <button class="text">Записать</button>
            <span class="sep"></span>
            <button class="text">Закрыть</button>
          </footer>
        </div>
      </section>
    </main>
  </body>
</html>
```
FILE: styles.css
```
* {
  box-sizing: border-box;
}

body {
  display: flex;
  flex-direction: column;
  min-height: 100vh;
  margin: 0;
  overflow-x: hidden;
  background-color: #efe7de;
  color: #423100;
  font-family: "Liberation Sans", Arial, sans-serif;
  font-size: 11px;
  line-height: 13px;
}

button, input {
  margin: 0;
  padding: 0;
  border: 0;
  border-radius: 0;
  background: none;
  color: inherit;
  font: inherit;
}

.sprite {
  position: absolute;
  width: 0;
  height: 0;
}

.icon {
  display: block;
  flex: none;
  width: 16px;
  height: 16px;
}

/* заголовок */
.titlebar {
  display: flex;
  align-items: center;
  gap: 2px;
  height: 18px;
  padding-left: 1px;
  background-color: #08246b;
  color: #fff;
}

.titlebar h1 {
  margin: 0;
  font-size: 12px;
  font-weight: bold;
}

/* меню и панели */
.menubar {
  display: flex;
  align-items: center;
  height: 24px;
  border-top: 1px solid #d6d3ce;
}

.menubar button {
  margin-left: 8px;
  padding-right: 4px;
}

.grip {
  flex: none;
  width: 3px;
  height: 13px;
  margin: 0 2px;
  background: repeating-linear-gradient(#b5ae84 0 1px, transparent 1px 2px);
}

.grip.inner {
  margin: 0 3px 0 6px;
}

.toolbar {
  display: flex;
  align-items: center;
  height: 26px;
}

.tool {
  display: flex;
  align-items: center;
  justify-content: center;
  flex: none;
  width: 23px;
  height: 22px;
}

.sep {
  flex: none;
  width: 2px;
  height: 18px;
  margin: 0 1px 0 2px;
  background: linear-gradient(90deg, #c6be9c 50%, #fff 50%);
}

.down {
  display: block;
  border: solid transparent;
  border-width: 4px 4px 0;
  border-top-color: #423100;
}

.more {
  flex: none;
  align-self: flex-end;
  width: 12px;
  padding: 0 2px 4px;
}

.memory {
  color: #844a29;
  font-size: 12px;
  font-weight: bold;
}

.field {
  display: flex;
  height: 19px;
  border: 1px solid #b5ae84;
  background-color: #fff;
}

.field input {
  flex: 1;
  min-width: 0;
  padding: 0 3px;
  color: #000;
  outline: none;
}

.field button {
  display: flex;
  align-items: center;
  justify-content: center;
  flex: none;
  width: 15px;
  border-left: 1px solid #b5ae84;
  background-color: #efe7de;
  color: #635100;
  font-weight: bold;
}

.field .dots {
  align-items: flex-end;
  font-size: 12px;
}

.field .down {
  border-top-color: #635100;
}

.search {
  width: 151px;
}

.cross {
  width: 9px;
  height: 9px;
  background:
    linear-gradient(45deg, transparent 42%, #635100 42% 58%, transparent 58%),
    linear-gradient(-45deg, transparent 42%, #635100 42% 58%, transparent 58%);
}

.taskbar {
  height: 24px;
}

.taskbar button {
  display: flex;
  align-items: center;
  gap: 3px;
  height: 22px;
  margin-top: 1px;
  padding: 0 2px;
  border: 1px solid #b5ae84;
}

/* рабочая область */
.workspace {
  display: flex;
  flex: 1;
  border-top: 2px solid #5a595a;
  border-left: 1px solid #5a595a;
  background-color: #d6d3bd;
}

.window {
  display: flex;
  flex-direction: column;
  width: calc(71% + 3px);
  padding: 0 3px 1px;
  border: 1px solid #f7f3e7;
  border-right-color: #848284;
  border-bottom: 0;
  background-color: #cecfce;
}

.window-title {
  display: flex;
  align-items: center;
  gap: 4px;
  height: 22px;
  padding: 0 2px;
  color: #313031;
}

.window-title h2 {
  flex: 1;
  margin: 0;
  font-size: 12px;
  font-weight: bold;
}

.frame {
  display: flex;
  flex: 1;
  flex-direction: column;
  border: 1px solid #73717b;
  background-color: #fffbf7;
}

.window-tools {
  display: flex;
  align-items: center;
  height: 25px;
  padding-left: 1px;
  border-bottom: 1px solid #b5ae84;
  background-color: #efe7de;
}

.text {
  display: flex;
  align-items: center;
  gap: 2px;
  height: 20px;
  padding: 0 4px;
  white-space: nowrap;
}

.text .down {
  border-width: 3px 3px 0;
}

/* форма */
.content {
  display: flex;
  flex: 1;
  flex-direction: column;
  padding: 8px;
}

.row {
  display: flex;
  align-items: center;
  height: 19px;
  margin-bottom: 5px;
}

.row label {
  display: flex;
  align-items: center;
  white-space: nowrap;
}

.head {
  margin-bottom: 8px;
}

.head > label:first-child, .comment > label {
  width: 86px;
}

.head .code-label {
  margin: 0 10px;
}

.code {
  width: 80px;
}

.grow {
  flex: 1;
  min-width: 0;
}

.row .label {
  flex: none;
  width: 112px;
}

.row .two-lines {
  white-space: normal;
}

.short {
  width: 105px;
}

.checks {
  display: flex;
  flex: 1;
  gap: 16px;
  padding: 0 9px 0 24px;
}

.checks label:first-child {
  margin-right: auto;
}

input[type="checkbox"] {
  appearance: none;
  width: 13px;
  height: 13px;
  margin-right: 2px;
  border: 1px solid #9c9263;
  border-radius: 2px;
  background-color: #fff;
}

input[type="checkbox"]:checked::before {
  content: "";
  display: block;
  width: 5px;
  height: 8px;
  margin: 0 3px;
  border: solid #313031;
  border-width: 0 2px 2px 0;
  transform: rotate(40deg);
}

.row .group-label {
  width: 115px;
  margin-left: 24px;
}

.left {
  display: flex;
  align-items: center;
  flex: 1;
  min-width: 0;
}

.inn-row {
  margin-top: 4px;
}

.go {
  display: flex;
  align-items: center;
  justify-content: center;
  flex: none;
  width: 20px;
  height: 19px;
  margin: 0 2px 0 1px;
  border: 1px solid #d6cfbd;
  background-color: #efe7de;
}

.kpp-label {
  flex: none;
  width: 27px;
}

.row .side-label {
  flex: none;
  width: 79px;
  margin-left: 16px;
}

.side {
  flex: none;
  width: 112px;
}

/* закладки */
.tabs {
  display: flex;
  align-items: flex-end;
  gap: 4px;
  height: 18px;
}

.tab {
  height: 16px;
  padding: 0 6px;
  border: 1px solid #fff7ce;
  border-bottom: 0;
  border-radius: 2px 2px 0 0;
  background-color: #f7f3e7;
  white-space: nowrap;
}

.tab.active {
  z-index: 1;
  height: 19px;
  margin-bottom: -1px;
  padding: 0 5px;
  border-color: #b5ae84;
  background-color: #fffbf7;
}

.panel {
  display: flex;
  flex: 1;
  flex-direction: column;
  padding: 7px 6px 6px;
  border: 1px solid #b5ae84;
}

.list-tools {
  display: flex;
  align-items: center;
  height: 23px;
  margin-bottom: 1px;
}

.sort span {
  display: flex;
  flex-direction: column;
  font: 9px/10px "Liberation Serif", serif;
}

.sort-arrow {
  width: 7px;
  height: 16px;
}

.blue {
  color: #104a84;
}

.red {
  color: #a51010;
}

.muted {
  color: #a58a52;
}

.list {
  flex: 1;
  border: 1px solid #b5ae84;
  background-color: #fff;
}

table {
  width: 100%;
  border-collapse: collapse;
}

th, td {
  height: 20px;
  padding: 0 4px;
  border-bottom: 1px solid #b5ae84;
  text-align: left;
}

th {
  background-color: #cecfb5;
  font-weight: normal;
}

td {
  color: #000;
  font-size: 12px;
  font-weight: bold;
}

.num {
  width: 29px;
  border-right: 1px solid #b5ae84;
}

th.num {
  background-color: #f7f3e7;
}

td.num {
  text-align: right;
}

td.selected {
  outline: 1px dotted #b5a642;
  outline-offset: -1px;
  background-color: #5269c6;
  color: #fff;
}

.row.comment {
  margin: 6px 0 0;
}

.window-footer {
  display: flex;
  align-items: center;
  justify-content: flex-end;
  height: 25px;
  padding-right: 2px;
  border-top: 1px solid #b5ae84;
  background-color: #efe7de;
}

.window-footer b {
  font-size: 12px;
}
```
